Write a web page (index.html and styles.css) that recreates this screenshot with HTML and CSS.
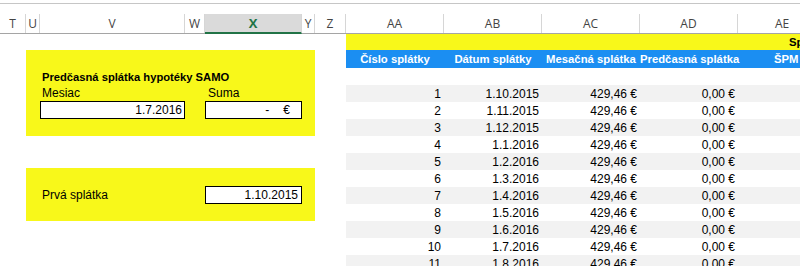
FILE: index.html
```html
<!DOCTYPE html>
<html lang="sk">
<head>
    <meta charset="UTF-8">
    <title>Hypotéka SAMO</title>
    <link rel="stylesheet" href="styles.css">
</head>
<body>
    <!-- pás nad hlavičkou stĺpcov -->
    <div class="top-strip"></div>

    <!-- hlavička stĺpcov -->
    <div class="col-heads">
      <div class="ch c-t">T</div>
      <div class="ch c-u">U</div>
      <div class="ch c-v">V</div>
      <div class="ch c-w">W</div>
      <div class="ch c-x active">X</div>
      <div class="ch c-y">Y</div>
      <div class="ch c-z">Z</div>
      <div class="ch c-n">AA</div>
      <div class="ch c-n">AB</div>
      <div class="ch c-n">AC</div>
      <div class="ch c-n">AD</div>
      <div class="ch c-rest">AE</div>
    </div>

    <div class="sheet">
      <!-- vstupné polia -->
      <div class="left-side">
        <div class="panel panel-loan">
          <div class="p-title">Predčasná splátka hypotéky SAMO</div>
          <div class="p-label col-v">Mesiac</div>
          <div class="p-label col-x">Suma</div>
          <div class="in-box col-v">1.7.2016</div>
          <div class="in-box col-x money"><span>-</span><span class="eur">€</span></div>
        </div>

        <div class="panel panel-first">
          <div class="p-label col-v">Prvá splátka</div>
          <div class="in-box col-x">1.10.2015</div>
        </div>
      </div>

      <!-- splátkový kalendár -->
      <div class="right-side">
        <div class="band-title"><span>Splátkový kalendár</span></div>
        <div class="trow thead">
          <div class="td">Číslo splátky</div>
          <div class="td">Dátum splátky</div>
          <div class="td">Mesačná splátka</div>
          <div class="td">Predčasná splátka</div>
          <div class="td last">ŠPM</div>
        </div>
        <div class="trow empty"></div>
        <div id="rows"></div>
      </div>
    </div>

    <script>
      // dáta splátok
      const dates = ['1.10.2015', '1.11.2015', '1.12.2015', '1.1.2016', '1.2.2016', '1.3.2016',
                     '1.4.2016', '1.5.2016', '1.6.2016', '1.7.2016', '1.8.2016'];
      const box = document.getElementById('rows');

      dates.forEach((d, i) => {
        const row = document.createElement('div');
        row.className = 'trow data' + (i % 2 === 0 ? ' odd' : '');
        row.innerHTML =
          '<div class="td">' + (i + 1) + '</div>' +
          '<div class="td">' + d + '</div>' +
          '<div class="td">429,46 €</div>' +
          '<div class="td">0,00 €</div>' +
          '<div class="td last"></div>';
        box.appendChild(row);
      });
    </script>
</body>
</html>
```

FILE: styles.css
```css
/* reset */
* {
  box-sizing: border-box;
  margin: 0;
  padding: 0;
}

body {
  width: 800px;
  height: 266px;
  overflow: hidden;
  background-color: #fff;
  font-family: "Liberation Sans", Arial, sans-serif;
  font-size: 12px;
  color: #000;
}

/* horný pás */
.top-strip {
  height: 14px;
  border-top: 3px solid #fff;
  position: relative;
}

.top-strip::before {
  content: "";
  display: block;
  height: 1px;
  background-color: #c6c6c6;
}

/* hlavička stĺpcov */
.col-heads {
  display: flex;
  height: 20px;
  border-bottom: 1px solid #a5a5a5;
  font-family: "Open Sans", "Noto Sans", sans-serif;
  font-size: 12px;
  color: #444;
}

.ch {
  display: flex;
  align-items: center;
  justify-content: center;
  border-right: 1px solid #d6d6d6;
  flex-shrink: 0;
}

.c-t { width: 26px; }
.c-u { width: 14px; }
.c-v { width: 145px; }
.c-w { width: 20px; }
.c-x { width: 97px; }
.c-y { width: 13px; }
.c-z { width: 31px; }
.c-n { width: 98px; }
.c-rest { flex: 1; border-right: none; justify-content: flex-start; padding-left: 37px; }

.ch.active {
  background-color: #dadada;
  color: #217346;
  font-weight: bold;
  font-size: 13px;
  border-bottom: 2px solid #217346;
  margin-bottom: -1px;
}

/* list */
.sheet {
  display: flex;
}

.left-side {
  width: 346px;
  flex-shrink: 0;
  padding-left: 26px;
}

.panel {
  width: 289px;
  background-color: #f8f81a;
  display: grid;
  grid-template-columns: 14px 145px 20px 97px 13px;
}

.panel-loan {
  margin-top: 16px;
  grid-template-rows: 18px 17px 16px 18px 17px;
}

.panel-first {
  margin-top: 32px;
  grid-template-rows: 18px 18px 17px;
}

.p-title {
  grid-column: 2 / 6;
  grid-row: 2;
  font-weight: bold;
  font-size: 11.2px;
  padding-left: 2px;
  display: flex;
  align-items: center;
}

.p-label {
  display: flex;
  align-items: center;
  padding-left: 2px;
}

.panel-loan .p-label { grid-row: 3; }
.panel-first .p-label { grid-row: 2; }

.col-v { grid-column: 2; }
.col-x { grid-column: 4; padding-left: 3px; }

.in-box {
  background-color: #fff;
  border: 1px solid #000;
  display: flex;
  align-items: center;
  justify-content: flex-end;
  padding-right: 2px;
}

.panel-loan .in-box { grid-row: 4; }
.panel-first .in-box { grid-row: 2; padding-right: 3px; }

.in-box.money {
  padding-right: 11px;
}

.in-box .eur {
  margin-left: 14px;
}

/* tabuľka splátok */
.right-side {
  flex: 1;
  overflow: hidden;
}

.band-title {
  height: 16px;
  background-color: #f8f81a;
  font-weight: bold;
  font-size: 11.3px;
  white-space: nowrap;
  padding-left: 443px;
  line-height: 16px;
}

.trow {
  display: flex;
  height: 17px;
  align-items: center;
}

.td {
  width: 98px;
  flex-shrink: 0;
  text-align: right;
  padding-right: 3px;
  white-space: nowrap;
}

.td.last {
  flex: 1;
}

.thead {
  height: 18px;
  background-color: #1b8ef2;
  color: #fff;
  font-weight: bold;
  font-size: 11.3px;
}

.thead .td {
  text-align: center;
  padding-right: 0;
}

.thead .td.last {
  text-align: left;
  padding-left: 36px;
}

.trow.odd {
  background-color: #f2f2f2;
}
```
